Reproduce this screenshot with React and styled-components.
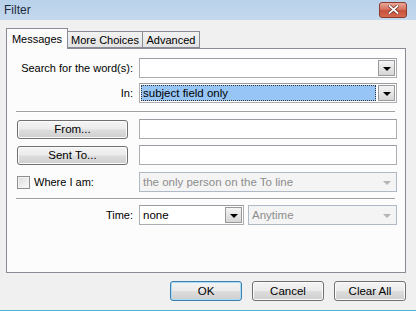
import React from 'react';
import styled, { createGlobalStyle } from 'styled-components';

const Global = createGlobalStyle`
  html, body { margin: 0; padding: 0; }
  body { width: 416px; height: 311px; overflow: hidden; background: #c6dbf0; }
`;

const Window = styled.div`
  width: 416px;
  height: 311px;
  display: flex;
  flex-direction: column;
  background: #c6dbf0;
  font-family: "Liberation Sans", Arial, sans-serif;
  font-size: 11px;
  color: #000;
`;

const TitleBar = styled.div`
  height: 20px;
  flex: none;
  display: flex;
  align-items: center;
  justify-content: space-between;
  padding: 0 9px 0 4px;
  background: linear-gradient(#b9d1ea, #c4d8ee);
`;

const TitleText = styled.span`
  font-size: 12px;
  color: #1b2a3c;
`;

const CloseButton = styled.div`
  width: 26px;
  height: 14px;
  margin-top: -1px;
  display: flex;
  align-items: center;
  justify-content: center;
  border: 1px solid #8d3a2e;
  border-radius: 3px;
  background: linear-gradient(#e8a898 0%, #d7735f 45%, #c7513b 55%, #d66a4f 100%);
`;

const Body = styled.div`
  width: 405px;
  height: 287px;
  padding: 8px 5px 0 6px;
  box-sizing: content-box;
  background: #f0f0f0;
  border-right: 1px solid #9fb3c9;
  border-bottom: 1px solid #4fb2d2;
`;

const TabStrip = styled.div`
  display: flex;
  align-items: flex-end;
  height: 20px;
  position: relative;
  z-index: 1;
`;

const Tab = styled.div`
  box-sizing: border-box;
  height: ${p => (p.$active ? '21px' : '17px')};
  margin-bottom: ${p => (p.$active ? '-1px' : '0')};
  width: ${p => p.$w}px;
  text-align: center;
  padding-top: ${p => (p.$active ? '4px' : '2px')};
  border: 1px solid #898c95;
  border-bottom: ${p => (p.$active ? 'none' : '1px solid #898c95')};
  margin-left: ${p => (p.$first ? '0' : '-1px')};
  background: ${p => (p.$active ? '#fcfcfc' : 'linear-gradient(#f2f2f2, #e3e3e3)')};
  white-space: nowrap;
  font-size: 11px;
`;

const Panel = styled.div`
  box-sizing: border-box;
  width: 400px;
  height: 225px;
  border: 1px solid #898c95;
  background: #fcfcfc;
  padding: 9px 8px 0 10px;
`;

const Row = styled.div`
  display: flex;
  align-items: center;
  height: 20px;
  margin-top: ${p => p.$mt || 0}px;
`;

const Label = styled.div`
  width: 116px;
  text-align: right;
  padding-right: 6px;
  flex: none;
  white-space: nowrap;
`;

const LeftCell = styled.div`
  width: 122px;
  flex: none;
  display: flex;
  align-items: center;
  white-space: nowrap;
`;

const Separator = styled.div`
  height: 1px;
  background: #a0a0a0;
  border-bottom: 1px solid #fff;
  margin: ${p => p.$mt}px 2px 0 -1px;
`;

const Field = styled.div`
  box-sizing: border-box;
  width: ${p => p.$w || 258}px;
  height: 20px;
  border: 1px solid ${p => (p.$disabled ? '#afbac6' : '#abadb3')};
  border-top-color: ${p => (p.$disabled ? '#afbac6' : '#9a9ca3')};
  background: ${p => (p.$disabled ? '#f4f4f4' : '#fff')};
  color: ${p => (p.$disabled ? '#8d8d8d' : '#000')};
  display: flex;
  align-items: center;
  padding: 1px;
  margin-right: ${p => p.$mr || 0}px;
  flex: none;
`;

const FieldText = styled.div`
  flex: 1;
  height: 16px;
  line-height: 16px;
  padding-left: 2px;
  white-space: nowrap;
  overflow: hidden;
  background: ${p => (p.$selected ? '#97c6f6' : 'transparent')};
  outline: ${p => (p.$selected ? '1px dotted #333' : 'none')};
  outline-offset: -1px;
  margin-right: 2px;
  font-size: 11.5px;
`;

const DropButton = styled.div`
  box-sizing: border-box;
  width: 17px;
  height: 16px;
  flex: none;
  display: flex;
  align-items: center;
  justify-content: center;
  border: 1px solid ${p => (p.$disabled ? 'transparent' : '#9a9a9a')};
  background: ${p => (p.$disabled ? 'transparent' : 'linear-gradient(#f4f4f4, #d6d6d6)')};
`;

const Arrow = styled.div`
  width: 0;
  height: 0;
  border-left: 4px solid transparent;
  border-right: 4px solid transparent;
  border-top: 4px solid ${p => (p.$disabled ? '#b4b4b4' : '#000')};
  margin-top: 1px;
`;

const PushButton = styled.div`
  box-sizing: border-box;
  width: ${p => p.$w}px;
  height: ${p => p.$h || 19}px;
  display: flex;
  align-items: center;
  justify-content: center;
  border: 1px solid ${p => (p.$default ? '#3c7fb1' : '#707070')};
  border-radius: 3px;
  background: linear-gradient(#f4f4f4 0%, #ebebeb 48%, #dddddd 52%, #cfcfcf 100%);
  box-shadow: ${p => (p.$default ? 'inset 0 0 0 1px #a8dcf6' : 'inset 0 0 0 1px #fbfbfb')};
  flex: none;
  font-size: 11.5px;
`;

const Check = styled.div`
  box-sizing: border-box;
  width: 13px;
  height: 13px;
  border: 1px solid #8f8f8f;
  background: linear-gradient(135deg, #dcdcdc, #fbfbfb);
  box-shadow: inset 0 0 0 1px #f4f4f4;
  margin-right: 4px;
`;

const ButtonBar = styled.div`
  display: flex;
  justify-content: flex-end;
  gap: 10px;
  margin-top: 8px;
  width: 400px;
`;

function Combo({ text, w, mr, disabled, selected }) {
  return (
    <Field $w={w} $mr={mr} $disabled={disabled}>
      <FieldText $selected={selected}>{text}</FieldText>
      <DropButton $disabled={disabled}>
        <Arrow $disabled={disabled} />
      </DropButton>
    </Field>
  );
}

export default function App() {
  return (
    <Window>
      <Global />
      <TitleBar>
        <TitleText>Filter</TitleText>
        <CloseButton>
          <svg width="11" height="9" viewBox="0 0 11 9">
            <path d="M1.5 1 L9.5 8 M9.5 1 L1.5 8" stroke="#6b2a20" strokeWidth="3.2" strokeLinecap="square" />
            <path d="M1.5 1 L9.5 8 M9.5 1 L1.5 8" stroke="#fff" strokeWidth="1.8" strokeLinecap="square" />
          </svg>
        </CloseButton>
      </TitleBar>
      <Body>
        <TabStrip>
          <Tab $active $first $w={62}>Messages</Tab>
          <Tab $w={76}>More Choices</Tab>
          <Tab $w={58}>Advanced</Tab>
        </TabStrip>
        <Panel>
          <Row>
            <Label>Search for the word(s):</Label>
            <Combo text="" />
          </Row>
          <Row $mt={5}>
            <Label>In:</Label>
            <Combo text="subject field only" selected />
          </Row>
          <Separator $mt={8} />
          <Row $mt={6}>
            <LeftCell>
              <PushButton $w={111}>From...</PushButton>
            </LeftCell>
            <Field />
          </Row>
          <Row $mt={6}>
            <LeftCell>
              <PushButton $w={111}>Sent To...</PushButton>
            </LeftCell>
            <Field />
          </Row>
          <Row $mt={7}>
            <LeftCell>
              <Check />
              <span>Where I am:</span>
            </LeftCell>
            <Combo text="the only person on the To line" disabled />
          </Row>
          <Separator $mt={6} />
          <Row $mt={5}>
            <Label>Time:</Label>
            <Combo text="none" w={105} mr={4} />
            <Combo text="Anytime" w={149} disabled />
          </Row>
        </Panel>
        <ButtonBar>
          <PushButton $w={72} $h={20} $default>OK</PushButton>
          <PushButton $w={72} $h={20}>Cancel</PushButton>
          <PushButton $w={72} $h={20}>Clear All</PushButton>
        </ButtonBar>
      </Body>
    </Window>
  );
}
